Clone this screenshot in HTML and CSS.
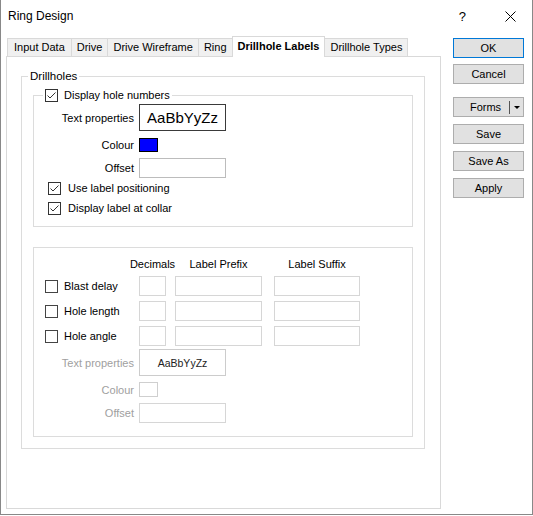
FILE: index.html
```html
<!DOCTYPE html>
<html>
<head>
<meta charset="utf-8">
<link rel="stylesheet" href="styles.css">
</head>
<body>
<div class="window">
  <div class="titlebar">
    <span class="title">Ring Design</span>
    <span class="help">?</span>
    <svg class="close" width="11" height="11" viewBox="0 0 11 11"><path d="M0.5 0.5 L10.5 10.5 M10.5 0.5 L0.5 10.5" stroke="#000" stroke-width="1" fill="none"/></svg>
  </div>
  <div class="main">
    <div class="tabarea">
      <div class="tabs">
        <div class="tab">Input Data</div>
        <div class="tab">Drive</div>
        <div class="tab">Drive Wireframe</div>
        <div class="tab">Ring</div>
        <div class="tab active">Drillhole Labels</div>
        <div class="tab">Drillhole Types</div>
      </div>
      <div class="panel">
        <div class="group outer">
          <span class="legend legend-outer">Drillholes</span>
          <div class="group inner-a">
            <span class="legend legend-check">
              <span class="cb"><svg width="11" height="11" viewBox="0 0 11 11"><path d="M1.5 5.5 L4 8 L9.5 2.5" stroke="#333" stroke-width="1" fill="none"/></svg></span>
              <span class="cb-text">Display hole numbers</span>
            </span>
            <div class="prow">
              <span class="plabel">Text properties</span>
              <div class="fontbox">AaBbYyZz</div>
            </div>
            <div class="prow colour-row">
              <span class="plabel">Colour</span>
              <div class="swatch blue"></div>
            </div>
            <div class="prow">
              <span class="plabel">Offset</span>
              <div class="input offset"></div>
            </div>
            <div class="crow">
              <span class="cb"><svg width="11" height="11" viewBox="0 0 11 11"><path d="M1.5 5.5 L4 8 L9.5 2.5" stroke="#333" stroke-width="1" fill="none"/></svg></span>
              <span class="crow-text">Use label positioning</span>
            </div>
            <div class="crow">
              <span class="cb"><svg width="11" height="11" viewBox="0 0 11 11"><path d="M1.5 5.5 L4 8 L9.5 2.5" stroke="#333" stroke-width="1" fill="none"/></svg></span>
              <span class="crow-text">Display label at collar</span>
            </div>
          </div>
          <div class="group inner-b">
            <div class="bgrid">
              <span></span>
              <span class="hdr dec">Decimals</span>
              <span class="hdr pre">Label Prefix</span>
              <span class="hdr suf">Label Suffix</span>

              <span class="bcheck"><span class="cb"></span><span class="cb-text">Blast delay</span></span>
              <span class="input dec"></span>
              <span class="input pre"></span>
              <span class="input suf"></span>

              <span class="bcheck"><span class="cb"></span><span class="cb-text">Hole length</span></span>
              <span class="input dec"></span>
              <span class="input pre"></span>
              <span class="input suf"></span>

              <span class="bcheck"><span class="cb"></span><span class="cb-text">Hole angle</span></span>
              <span class="input dec"></span>
              <span class="input pre"></span>
              <span class="input suf"></span>
            </div>
            <div class="disabled">
              <div class="prow">
                <span class="plabel">Text properties</span>
                <div class="fontbox small">AaBbYyZz</div>
              </div>
              <div class="prow colour-row2">
                <span class="plabel">Colour</span>
                <div class="swatch empty"></div>
              </div>
              <div class="prow">
                <span class="plabel">Offset</span>
                <div class="input offset"></div>
              </div>
            </div>
          </div>
        </div>
      </div>
    </div>
    <div class="buttons">
      <div class="btn default">OK</div>
      <div class="btn">Cancel</div>
      <div class="btn split gap-top"><span class="split-text">Forms</span><span class="split-sep"></span><span class="split-arrow"></span></div>
      <div class="btn">Save</div>
      <div class="btn">Save As</div>
      <div class="btn">Apply</div>
    </div>
  </div>
</div>
</body>
</html>
```
FILE: styles.css
```css
* { box-sizing: border-box; }
body {
  margin: 0;
  background: #fff;
  font-family: "Liberation Sans", Arial, sans-serif;
  font-size: 11px;
  color: #000;
}
.window {
  width: 533px;
  height: 515px;
  border: 1px solid #888;
  border-top: none;
  background: #fff;
  display: flex;
  flex-direction: column;
}
.titlebar {
  height: 36px;
  display: flex;
  align-items: center;
  padding: 0 16px 4px 7px;
}
.title { font-size: 12px; }
.help { margin-left: auto; font-size: 13px; }
.close { margin-left: 39px; }

.main { display: flex; padding-left: 5px; }
.tabarea { width: 435px; }
.tabs {
  display: flex;
  height: 20px;
  align-items: flex-end;
  padding-left: 1px;
}
.tab {
  height: 18px;
  line-height: 17px;
  padding: 0 5px;
  background: #f0f0f0;
  border: 1px solid #d9d9d9;
  border-bottom: none;
  margin-left: -1px;
  white-space: nowrap;
}
.tab:first-child { margin-left: 0; padding: 0 6px; }
.tab.active {
  height: 21px;
  line-height: 19px;
  background: #fff;
  font-weight: bold;
  margin-bottom: -1px;
  position: relative;
  z-index: 1;
}
.panel {
  height: 453px;
  border: 1px solid #d9d9d9;
  padding: 19px 15px 0 14px;
}
.group {
  border: 1px solid #dcdcdc;
  position: relative;
}
.outer { padding: 18px 11px 11px 11px; }
.legend {
  position: absolute;
  top: -8px;
  background: #fff;
  padding: 0 2px;
  line-height: 14px;
  height: 14px;
  display: flex;
  align-items: center;
}
.legend-outer { left: 6px; font-size: 11.5px; }
.legend-check { left: 9px; }
.cb {
  width: 13px;
  height: 13px;
  border: 1px solid #333;
  background: #fff;
  display: inline-flex;
  align-items: center;
  justify-content: center;
  flex: none;
}
.cb-text { margin-left: 6px; }

.inner-a { padding: 8px 0 8px 0; }
.prow { display: flex; align-items: center; }
.plabel {
  width: 100px;
  text-align: right;
  margin-right: 5px;
  white-space: nowrap;
}
.fontbox {
  width: 87px;
  height: 27px;
  border: 1px solid #3a3a3a;
  display: flex;
  align-items: center;
  justify-content: center;
  font-size: 15px;
}
.colour-row { margin: 7px 0 6px; }
.swatch {
  width: 19px;
  height: 14px;
}
.swatch.blue { background: #0000ff; border: 1px solid #000; }
.swatch.empty { background: #fff; border: 1px solid #cfcfcf; height: 15px; }
.input {
  display: block;
  height: 20px;
  border: 1px solid #d6d6d6;
  background: #fff;
}
.input.offset { width: 87px; border-color: #bcbcbc; }
.crow {
  height: 20px;
  display: flex;
  align-items: center;
  padding-left: 14px;
}
.crow-text { margin-left: 7px; }

.inner-b {
  margin-top: 20px;
  padding: 10px 0 13px 0;
}
.bgrid {
  display: grid;
  grid-template-columns: 105px 36px 99px 86px;
  grid-template-rows: 13px 20px 20px 20px;
  row-gap: 5px;
  align-items: center;
}
.hdr {
  display: flex;
  justify-content: center;
  white-space: nowrap;
  line-height: 13px;
}
.dec { width: 27px; }
.pre { width: 87px; }
.suf { width: 86px; }
.bcheck {
  display: flex;
  align-items: center;
  padding-left: 11px;
}
.bcheck .cb { border-color: #444; }
.disabled { margin-top: 3px; }
.disabled .plabel { color: #a0a0a0; }
.fontbox.small {
  font-size: 10.5px;
  border-color: #cccccc;
  color: #222;
}
.colour-row2 { margin: 6px 0 6px; }
.disabled .input.offset { border-color: #d6d6d6; }

.buttons {
  margin-left: 12px;
  width: 71px;
  padding-top: 2px;
  display: flex;
  flex-direction: column;
}
.btn {
  height: 20px;
  background: #e1e1e1;
  border: 1px solid #adadad;
  display: flex;
  align-items: center;
  justify-content: center;
  margin-top: 7px;
}
.btn.default { border-color: #0078d7; margin-top: 0; }
.btn.default + .btn { margin-top: 6px; }
.btn.gap-top { margin-top: 13px; }
.split { justify-content: flex-start; }
.split-text { flex: 1; text-align: center; padding-left: 8px; }
.split-sep { width: 1px; height: 13px; background: #555; }
.split-arrow {
  width: 13px;
  height: 100%;
  display: flex;
  align-items: center;
  justify-content: center;
}
.split-arrow::before {
  content: "";
  border-left: 3px solid transparent;
  border-right: 3px solid transparent;
  border-top: 3px solid #000;
}
```
